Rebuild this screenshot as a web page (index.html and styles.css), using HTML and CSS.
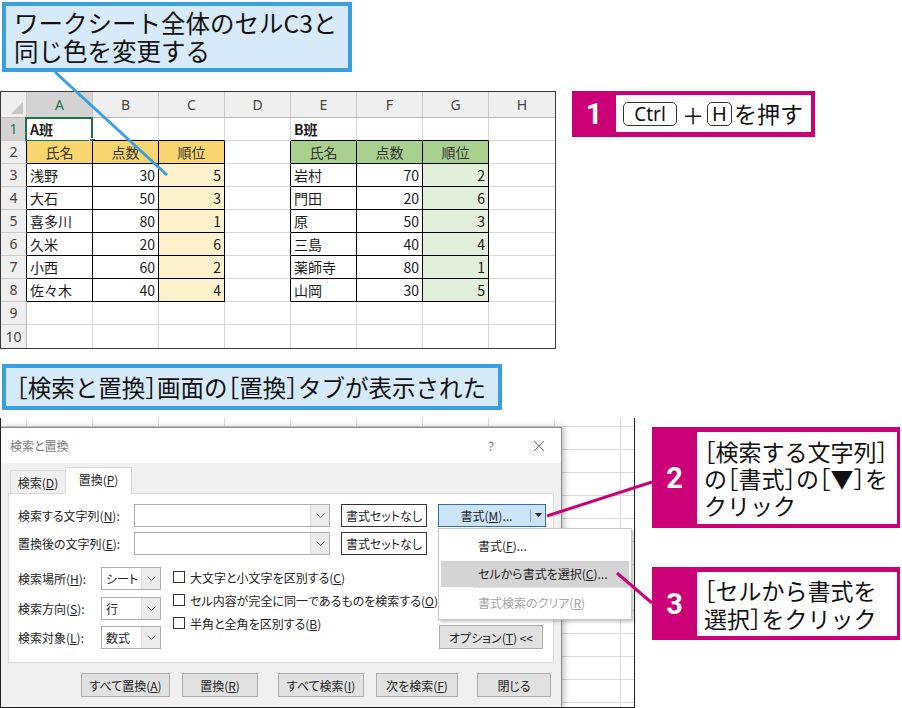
FILE: index.html
```html
<!DOCTYPE html>
<html lang="ja">
<head>
<meta charset="utf-8">
<title>検索と置換</title>
<link rel="stylesheet" href="styles.css">
</head>
<body>
<div class="page">
  <div class="note note-top">ワークシート全体のセルC3と<br>同じ色を変更する</div>

  <div class="sheet-row">
    <div class="sheet">
      <div class="c hd corner"><span class="tri"></span></div>
      <div class="c hd hsel">A</div>
      <div class="c hd">B</div>
      <div class="c hd">C</div>
      <div class="c hd">D</div>
      <div class="c hd">E</div>
      <div class="c hd">F</div>
      <div class="c hd">G</div>
      <div class="c hd">H</div>

      <div class="c rh hsel">1</div>
      <div class="c bold a1 bk">A班<span class="selbox"><span class="handle"></span></span></div>
      <div class="c bk"></div>
      <div class="c bk"></div>
      <div class="c"></div>
      <div class="c bold bk">B班</div>
      <div class="c bk"></div>
      <div class="c bk"></div>
      <div class="c"></div>

      <div class="c rh lk">2</div>
      <div class="c t y1 ctr">氏名</div>
      <div class="c t y1 ctr">点数</div>
      <div class="c t y1 ctr">順位</div>
      <div class="c lk"></div>
      <div class="c t g1 ctr">氏名</div>
      <div class="c t g1 ctr">点数</div>
      <div class="c t g1 ctr">順位</div>
      <div class="c"></div>

      <div class="c rh lk">3</div>
      <div class="c t">浅野</div>
      <div class="c t num">30</div>
      <div class="c t y2 num">5</div>
      <div class="c lk"></div>
      <div class="c t">岩村</div>
      <div class="c t num">70</div>
      <div class="c t g2 num">2</div>
      <div class="c"></div>

      <div class="c rh lk">4</div>
      <div class="c t">大石</div>
      <div class="c t num">50</div>
      <div class="c t y2 num">3</div>
      <div class="c lk"></div>
      <div class="c t">門田</div>
      <div class="c t num">20</div>
      <div class="c t g2 num">6</div>
      <div class="c"></div>

      <div class="c rh lk">5</div>
      <div class="c t">喜多川</div>
      <div class="c t num">80</div>
      <div class="c t y2 num">1</div>
      <div class="c lk"></div>
      <div class="c t">原</div>
      <div class="c t num">50</div>
      <div class="c t g2 num">3</div>
      <div class="c"></div>

      <div class="c rh lk">6</div>
      <div class="c t">久米</div>
      <div class="c t num">20</div>
      <div class="c t y2 num">6</div>
      <div class="c lk"></div>
      <div class="c t">三島</div>
      <div class="c t num">40</div>
      <div class="c t g2 num">4</div>
      <div class="c"></div>

      <div class="c rh lk">7</div>
      <div class="c t">小西</div>
      <div class="c t num">60</div>
      <div class="c t y2 num">2</div>
      <div class="c lk"></div>
      <div class="c t">薬師寺</div>
      <div class="c t num">80</div>
      <div class="c t g2 num">1</div>
      <div class="c"></div>

      <div class="c rh lk">8</div>
      <div class="c t">佐々木</div>
      <div class="c t num">40</div>
      <div class="c t y2 num">4</div>
      <div class="c lk"></div>
      <div class="c t">山岡</div>
      <div class="c t num">30</div>
      <div class="c t g2 num">5</div>
      <div class="c"></div>

      <div class="c rh">9</div>
      <div class="c"></div><div class="c"></div><div class="c"></div><div class="c"></div>
      <div class="c"></div><div class="c"></div><div class="c"></div><div class="c"></div>

      <div class="c rh">10</div>
      <div class="c"></div><div class="c"></div><div class="c"></div><div class="c"></div>
      <div class="c"></div><div class="c"></div><div class="c"></div><div class="c"></div>
    </div>

    <div class="step step1">
      <div class="step-num">1</div>
      <div class="step-body s1body">
        <span class="key key-ctrl">Ctrl</span><span class="plus">＋</span><span class="key key-h">H</span><span class="s1txt">を押す</span>
      </div>
    </div>
  </div>

  <div class="note note-mid">［検索と置換］画面の［置換］タブが表示された</div>

  <div class="bottom">
    <div class="screen">
      <div class="dialog">
        <div class="titlebar">
          <span class="title">検索と置換</span>
          <span class="help">?</span>
          <span class="close"><svg width="12" height="12" viewBox="0 0 12 12"><path d="M1 1L11 11M11 1L1 11" stroke="#6f6f6f" stroke-width="1" fill="none"/></svg></span>
        </div>
        <div class="dbody">
          <div class="tabs">
            <div class="tab">検索(<u>D</u>)</div>
            <div class="tab active">置換(<u>P</u>)</div>
          </div>
          <div class="panel">
            <div class="frow">
              <span class="flabel">検索する文字列(<u>N</u>):</span>
              <div class="combo"><span class="dd"><svg width="9" height="5" viewBox="0 0 9 5"><path d="M0.5 0.5L4.5 4.5L8.5 0.5" fill="none" stroke="#6a6a6a"/></svg></span></div>
              <div class="btn btn-nofmt">書式セットなし</div>
              <div class="fmt-wrap">
                <div class="fmt">
                  <span class="fmt-label">書式(<u>M</u>)...</span>
                  <span class="fmt-div"></span>
                  <span class="fmt-arrow"><svg width="7" height="4" viewBox="0 0 7 4"><path d="M0 0H7L3.5 4Z" fill="#222"/></svg></span>
                </div>
                <div class="menu">
                  <div class="mi mi1">書式(<u>F</u>)...</div>
                  <div class="mi mi2">セルから書式を選択(<u>C</u>)...</div>
                  <div class="msep"></div>
                  <div class="mi mi3">書式検索のクリア(<u>R</u>)</div>
                </div>
              </div>
            </div>
            <div class="frow frow2">
              <span class="flabel">置換後の文字列(<u>E</u>):</span>
              <div class="combo"><span class="dd"><svg width="9" height="5" viewBox="0 0 9 5"><path d="M0.5 0.5L4.5 4.5L8.5 0.5" fill="none" stroke="#6a6a6a"/></svg></span></div>
              <div class="btn btn-nofmt">書式セットなし</div>
            </div>
            <div class="lower">
              <div class="opts">
                <span class="olabel">検索場所(<u>H</u>):</span>
                <div class="sel"><span class="sel-v">シート</span><span class="dd"><svg width="9" height="5" viewBox="0 0 9 5"><path d="M0.5 0.5L4.5 4.5L8.5 0.5" fill="none" stroke="#6a6a6a"/></svg></span></div>
                <span class="olabel">検索方向(<u>S</u>):</span>
                <div class="sel"><span class="sel-v">行</span><span class="dd"><svg width="9" height="5" viewBox="0 0 9 5"><path d="M0.5 0.5L4.5 4.5L8.5 0.5" fill="none" stroke="#6a6a6a"/></svg></span></div>
                <span class="olabel">検索対象(<u>L</u>):</span>
                <div class="sel"><span class="sel-v">数式</span><span class="dd"><svg width="9" height="5" viewBox="0 0 9 5"><path d="M0.5 0.5L4.5 4.5L8.5 0.5" fill="none" stroke="#6a6a6a"/></svg></span></div>
              </div>
              <div class="checks">
                <div class="chk"><span class="box"></span>大文字と小文字を区別する(<u>C</u>)</div>
                <div class="chk"><span class="box"></span>セル内容が完全に同一であるものを検索する(<u>O</u>)</div>
                <div class="chk"><span class="box"></span>半角と全角を区別する(<u>B</u>)</div>
              </div>
              <div class="btn btn-opt">オプション(<u>T</u>) &lt;&lt;</div>
            </div>
          </div>
          <div class="actions">
            <div class="btn abtn ab1">すべて置換(<u>A</u>)</div>
            <div class="btn abtn ab2">置換(<u>R</u>)</div>
            <div class="btn abtn ab3">すべて検索(<u>I</u>)</div>
            <div class="btn abtn ab4">次を検索(<u>F</u>)</div>
            <div class="btn abtn ab5">閉じる</div>
          </div>
        </div>
      </div>
    </div>

    <div class="steps">
      <div class="step step2">
        <div class="step-num">2</div>
        <div class="step-body stxt s2body">［検索する文字列］<br>の［書式］の［▼］を<br>クリック</div>
      </div>
      <div class="step step3">
        <div class="step-num">3</div>
        <div class="step-body stxt s3body">［セルから書式を<br>選択］をクリック</div>
      </div>
    </div>
  </div>

  <svg class="lines" width="902" height="708" viewBox="0 0 902 708">
    <path d="M55 72L167 175" stroke="#3a9fe2" stroke-width="3" fill="none"/>
    <path d="M652 482L547 516" stroke="#cc0077" stroke-width="3" fill="none"/>
    <path d="M617 573L652 603" stroke="#cc0077" stroke-width="3" fill="none"/>
  </svg>
</div>
</body>
</html>
```

FILE: styles.css
```css
* { box-sizing: border-box; margin: 0; padding: 0; }
html, body { background: #fff; }
body {
  width: 902px;
  height: 708px;
  overflow: hidden;
  font-family: "Noto Sans CJK JP", "Noto Sans", sans-serif;
  color: #111;
}
u { text-decoration: underline; text-underline-offset: 1px; }

.page { position: relative; width: 902px; height: 708px; padding-top: 2px; }

/* blue notes */
.note {
  background: #d6eaf9;
  border: 4px solid #3a9fe2;
  color: #111;
  font-feature-settings: "halt";
}
.note-top {
  width: 350px;
  height: 70px;
  margin-left: 2px;
  padding: 3px 0 0 8px;
  font-size: 24.5px;
  line-height: 28px;
}
.note-mid {
  width: 500px;
  height: 46px;
  margin: 15px 0 0 2px;
  padding-left: 10px;
  font-size: 23.5px;
  line-height: 38px;
  white-space: nowrap;
}

/* spreadsheet */
.sheet-row { display: flex; align-items: flex-start; margin-top: 19px; }
.sheet {
  display: grid;
  grid-template-columns: 26px repeat(8, 66px);
  grid-template-rows: 26px repeat(10, 23px);
  width: 556px;
  border: 1px solid #3a3a3a;
  font-size: 14px;
}
.c {
  position: relative;
  display: flex;
  align-items: center;
  padding: 0 3px;
  border-right: 1px solid #d8d8d8;
  border-bottom: 1px solid #d8d8d8;
  white-space: nowrap;
  line-height: 1;
  color: #1a1a1a;
}
.sheet > .c:nth-child(9n) { border-right: 0; }
.sheet > .c:nth-last-child(-n+9) { border-bottom: 0; }
.hd {
  justify-content: center;
  background: #efefef;
  color: #444;
  border-right-color: #c9c9c9;
  border-bottom-color: #b8b8b8;
  font-family: "Noto Sans", sans-serif;
  font-size: 14px;
}
.rh {
  justify-content: center;
  background: #efefef;
  color: #444;
  border-right-color: #b8b8b8;
  border-bottom-color: #c9c9c9;
  font-family: "Noto Sans", sans-serif;
  font-size: 14px;
  padding: 0;
}
.hsel { background: #d3d3d3; color: #217346; }
.corner { background: #efefef; }
.tri {
  position: absolute;
  right: 3px;
  bottom: 3px;
  width: 0;
  height: 0;
  border-left: 12px solid transparent;
  border-bottom: 12px solid #c6c6c6;
}
.bold { font-weight: bold; }
.bk { border-bottom-color: #000; }
.lk { border-right-color: #000; }
.t { border-right-color: #000; border-bottom-color: #000; }
.ctr { justify-content: center; color: #333; }
.num { justify-content: flex-end; }
.y1 { background: #f8d56e; }
.y2 { background: #fdf1cb; }
.g1 { background: #a9d08e; }
.g2 { background: #e2efda; }
.selbox {
  position: absolute;
  left: -2px;
  top: -1px;
  right: -1px;
  bottom: -2px;
  border: 2px solid #217346;
}
.handle {
  position: absolute;
  right: -5px;
  bottom: -5px;
  width: 7px;
  height: 7px;
  background: #217346;
  border: 1px solid #fff;
}

/* magenta steps */
.step { display: flex; background: #cc0077; }
.step-num {
  display: flex;
  align-items: center;
  justify-content: center;
  color: #fff;
  font-family: Roboto, "Liberation Sans", sans-serif;
  font-weight: bold;
  font-size: 29px;
}
.step-body { background: #fff; }
.step1 { width: 243px; height: 46px; margin-left: 16px; padding: 4px 4px 5px 0; }
.step1 .step-num { width: 44px; }
.s1body { flex: 1; display: flex; align-items: center; padding-left: 7px; }
.key {
  display: flex;
  align-items: center;
  justify-content: center;
  height: 24px;
  border: 1.5px solid #333;
  border-radius: 5px;
  font-family: "Noto Sans", sans-serif;
  color: #111;
}
.key-ctrl { width: 54px; font-size: 19px; }
.key-h { width: 25px; font-size: 20px; }
.plus { font-size: 22px; margin: 0 3px 0 5px; line-height: 1; }
.s1txt { font-size: 23px; margin-left: 2px; line-height: 1; }

.stxt { font-size: 23px; font-feature-settings: "halt"; white-space: nowrap; padding-left: 7px; }
.step2 { width: 248px; height: 101px; padding: 5px 3px 4px 0; }
.step3 { width: 248px; height: 73px; padding: 5px 3px 4px 0; margin-top: 39px; }
.step2 .step-num, .step3 .step-num { width: 45px; }
.s2body { flex: 1; line-height: 27px; padding-top: 6px; }
.s3body { flex: 1; line-height: 28px; padding-top: 4px; }

/* bottom */
.bottom { display: flex; align-items: flex-start; margin-top: 8px; }
.steps { margin-left: 17px; padding-top: 9px; }
.screen {
  width: 635px;
  height: 290px;
  border: 1px solid #222;
  border-top: 0;
  padding-top: 9px;
  background-color: #fff;
  background-image:
    linear-gradient(to right, #d9d9d9 1px, transparent 1px),
    linear-gradient(to bottom, #d9d9d9 1px, transparent 1px);
  background-size: 66px 23px, 66px 23px;
  background-position: 25px 0, 0 8px;
}

.dialog {
  width: 561px;
  height: 280px;
  background: #f0f0f0;
  border: 1px solid #8c8c8c;
  border-left: 0;
  border-bottom: 0;
  box-shadow: 2px 0 6px rgba(0, 0, 0, 0.28);
  font-size: 12px;
  color: #222;
  position: relative;
  font-feature-settings: "palt";
}
.titlebar {
  height: 35px;
  background: #fff;
  display: flex;
  align-items: center;
  padding-left: 9px;
}
.title { color: #7a7a7a; font-size: 12px; }
.help { margin-left: auto; width: 20px; text-align: center; color: #7a7a7a; font-size: 13px; font-family: "Noto Sans", sans-serif; }
.close { width: 20px; margin: 0 12px 0 28px; display: flex; justify-content: center; }

.dbody { padding: 0 7px 0 7px; }
.tabs { height: 30px; display: flex; align-items: flex-end; padding-left: 2px; }
.tab {
  height: 23px;
  width: 56px;
  border: 1px solid #d9d9d9;
  border-bottom: 0;
  display: flex;
  align-items: center;
  justify-content: center;
  background: #f0f0f0;
}
.tab.active {
  width: 67px;
  height: 27px;
  margin-left: -1px;
  margin-bottom: -1px;
  background: #fff;
  position: relative;
  z-index: 1;
  padding-bottom: 3px;
}
.panel {
  width: 546px;
  height: 170px;
  background: #fff;
  border: 1px solid #d9d9d9;
  padding: 9px 0 0 9px;
}
.frow { display: flex; align-items: center; height: 24px; }
.frow2 { margin-top: 4px; }
.flabel { width: 116px; white-space: nowrap; }
.combo {
  width: 196px;
  height: 23px;
  border: 1px solid #adadad;
  background: #fff;
  display: flex;
  justify-content: flex-end;
}
.dd {
  width: 19px;
  flex-shrink: 0;
  display: flex;
  align-items: center;
  justify-content: center;
  background: #ececec;
  border-left: 1px solid #dcdcdc;
}
.btn {
  display: flex;
  align-items: center;
  justify-content: center;
  white-space: nowrap;
  height: 23px;
  background: #e1e1e1;
  border: 1px solid #adadad;
}
.btn-nofmt { width: 86px; margin-left: 11px; background: #fff; border-color: #333; }
.fmt-wrap { position: relative; margin-left: 11px; }
.fmt {
  width: 108px;
  height: 23px;
  display: flex;
  align-items: center;
  background: #cce4f7;
  border: 1px solid #2e6db4;
}
.fmt-label { flex: 1; text-align: center; padding-left: 4px; }
.fmt-div { width: 1px; height: 13px; background: #8aa6c2; }
.fmt-arrow { width: 14px; display: flex; justify-content: center; }
.menu {
  position: absolute;
  left: 0;
  top: 24px;
  width: 194px;
  height: 92px;
  background: #fff;
  border: 1px solid #c8c8c8;
  box-shadow: 2px 2px 3px rgba(0, 0, 0, 0.22);
  padding: 2px 2px 0 2px;
  z-index: 5;
}
.mi { display: flex; align-items: center; padding-left: 37px; white-space: nowrap; }
.mi1 { height: 30px; }
.mi2 { height: 26px; background: #d4d4d4; }
.msep { height: 1px; background: #e2e2e2; margin-left: 32px; }
.mi3 { height: 30px; color: #a6a6a6; }

.lower { display: flex; margin-top: 12px; height: 82px; }
.opts {
  width: 143px;
  display: grid;
  grid-template-columns: 83px 60px;
  grid-auto-rows: 23px;
  row-gap: 6.5px;
  align-items: center;
}
.olabel { white-space: nowrap; }
.sel {
  height: 23px;
  border: 1px solid #adadad;
  background: #fff;
  display: flex;
}
.sel-v { flex: 1; padding-left: 4px; display: flex; align-items: center; white-space: nowrap; overflow: hidden; }
.checks { width: 254px; margin-left: 12px; display: flex; flex-direction: column; row-gap: 3px; }
.chk { height: 20px; display: flex; align-items: center; white-space: nowrap; }
.box { width: 12px; height: 12px; flex-shrink: 0; border: 1px solid #333; background: #fff; margin-right: 5px; }
.btn-opt { width: 104px; height: 24px; margin-left: 12px; align-self: flex-end; }

.actions { display: flex; margin-top: 10px; padding-left: 73px; }
.abtn { height: 24px; }
.ab1 { width: 89px; }
.ab2 { width: 76px; margin-left: 12px; }
.ab3 { width: 86px; margin-left: 20px; }
.ab4 { width: 82px; margin-left: 12px; }
.ab5 { width: 74px; margin-left: 19px; }

.lines { position: absolute; left: 0; top: 0; pointer-events: none; z-index: 10; }
```
